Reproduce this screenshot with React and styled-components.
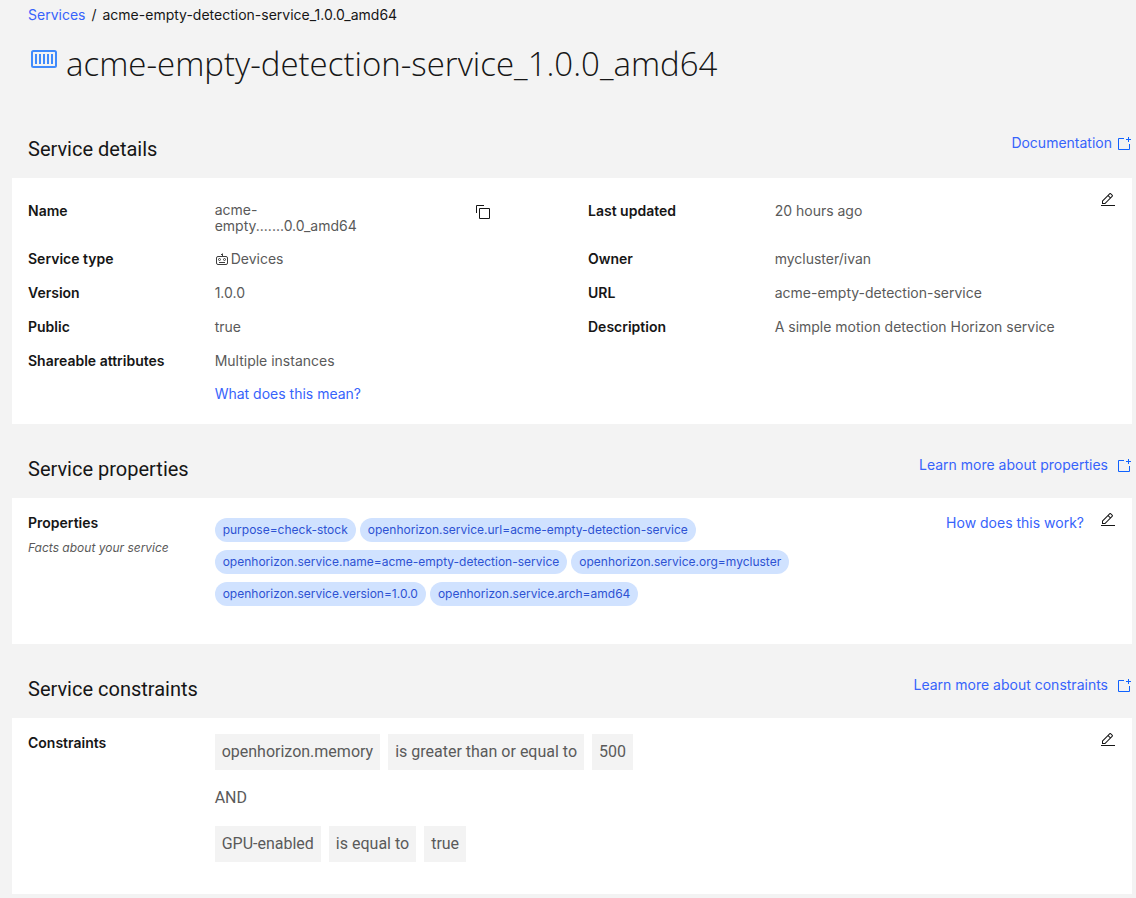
import React from "react";
import styled, { createGlobalStyle } from "styled-components";

const color = {
  page: "#f3f3f3",
  card: "#ffffff",
  ink: "#161616",
  text: "#5a5a5a",
  link: "#3763fb",
  tagFill: "#d0e2ff",
  tagText: "#2d52d3",
};

const GlobalStyle = createGlobalStyle`
  *, *::before, *::after { box-sizing: border-box; }
  body {
    margin: 0;
    background: ${color.page};
    color: ${color.ink};
    font-family: Inter, "Liberation Sans", sans-serif;
    font-size: 14px;
    line-height: 18px;
  }
  h1, h2, h3, p, dl, dd, ol, ul { margin: 0; padding: 0; }
  ol, ul { list-style: none; }
`;

const Page = styled.main`
  padding: 6px 4px 4px 12px;
`;

const Breadcrumb = styled.ol`
  display: flex;
  gap: 6px;
  padding-left: 16px;
`;

const Link = styled.a`
  color: ${color.link};
  text-decoration: none;
  &:hover { text-decoration: underline; }
`;

const TitleBar = styled.header`
  display: flex;
  align-items: flex-start;
  gap: 8px;
  padding: 20px 0 20px 18px;
  svg { flex: none; margin-top: 6px; }
`;

const Title = styled.h1`
  font-family: "Open Sans", "Noto Sans", sans-serif;
  font-size: 33px;
  font-weight: 300;
  line-height: 40px;
`;

const SectionHeader = styled.div`
  display: flex;
  justify-content: space-between;
  align-items: flex-end;
  height: 74px;
  padding: 0 0 16px 16px;
`;

const SectionTitle = styled.h2`
  font-family: Roboto, "Liberation Sans", sans-serif;
  font-size: 20px;
  font-weight: 400;
  line-height: 26px;
`;

const DocLink = styled(Link)`
  display: flex;
  align-items: center;
  gap: ${(p) => (p.$tight ? 4 : 8)}px;
  padding-bottom: ${(p) => (p.$tight ? 10 : 8)}px;
`;

const Card = styled.div`
  display: grid;
  background: ${color.card};
  padding-bottom: ${(p) => p.$bottom}px;
  & > * { grid-area: 1 / 1; }
`;

const IconButton = styled.button`
  display: block;
  width: 16px;
  height: 16px;
  padding: 0;
  border: 0;
  background: none;
  color: ${color.ink};
  cursor: pointer;
  svg { display: block; }
`;

const EditButton = styled(IconButton)`
  justify-self: end;
  margin: 14px 16px 0 0;
`;

const Details = styled.dl`
  display: grid;
  grid-template-columns: 1fr 2fr 1fr 2fr;
  row-gap: 16px;
  padding-top: 24px;
`;

const Label = styled.dt`
  padding-left: 16px;
  font-weight: 600;
`;

const Value = styled.dd`
  padding: 0 16px;
  color: ${color.text};
  grid-column: ${(p) => (p.$wide ? "span 3" : "auto")};
`;

const CopyValue = styled(Value)`
  display: grid;
  grid-template-columns: 1fr 1fr;
  padding-right: 0;
  line-height: 16px;
  ${IconButton} { justify-self: center; margin-top: 2px; }
`;

const IconText = styled.span`
  display: flex;
  align-items: center;
`;

const MoreInfo = styled.p`
  padding-top: 15px;
`;

const Columns = styled.div`
  display: grid;
  grid-template-columns: 1fr 4fr 1fr;
  padding-top: 16px;
`;

const LabelCell = styled.div`
  padding-left: 16px;
`;

const LabelTitle = styled.h3`
  font-size: 14px;
  font-weight: 600;
`;

const Hint = styled.p`
  padding-top: 8px;
  color: ${color.text};
  font-size: 12px;
  line-height: 16px;
  font-style: italic;
`;

const Tags = styled.ul`
  display: flex;
  flex-wrap: wrap;
  gap: 8px 4px;
  padding: 4px 16px 0;
`;

const Tag = styled.li`
  padding: 4px 8px;
  border-radius: 12px;
  background: ${color.tagFill};
  color: ${color.tagText};
  font-size: 12px;
  line-height: 16px;
`;

const HelpLink = styled(Link)`
  justify-self: end;
  padding-right: 48px;
  white-space: nowrap;
`;

const Expression = styled.div`
  padding: 0 16px;
  color: ${color.text};
  font-family: Roboto, "Liberation Sans", sans-serif;
  font-size: 16px;
  line-height: 20px;
`;

const Clause = styled.div`
  display: flex;
  flex-wrap: wrap;
  gap: 8px;
`;

const Token = styled.span`
  padding: 8px 7px;
  background: ${color.page};
`;

const Operator = styled.p`
  padding: 18px 0;
`;

const ContainerIcon = () => (
  <svg width="28" height="20" viewBox="0 0 28 20" aria-hidden="true">
    <rect x="2" y="1" width="24" height="16" rx="1.5" fill="none" stroke="#408bfc" strokeWidth="2" />
    <path d="M6 4v10M10 4v10M14 4v10M18 4v10M22 4v10" stroke="#408bfc" strokeWidth="2" />
  </svg>
);

const NewTabIcon = () => (
  <svg width="16" height="16" viewBox="0 -2 32 32" fill="#0f62fe" aria-hidden="true">
    <path d="M26 28H6a2 2 0 0 1-2-2V6a2 2 0 0 1 2-2h10v2H6v20h20V16h2v10a2 2 0 0 1-2 2z" />
    <path d="M26 6V2h-2v4h-4v2h4v4h2V8h4V6z" />
  </svg>
);

const EditIcon = () => (
  <svg width="16" height="16" viewBox="0 0 32 32" fill="currentColor" aria-hidden="true">
    <path d="M2 26h28v2H2zM25.4 9c.8-.8.8-2 0-2.8l-3.6-3.6c-.8-.8-2-.8-2.8 0l-15 15V24h6.4l15-15zm-5-5L24 7.6l-3 3L17.4 7l3-3zM6 22v-3.6l10-10 3.6 3.6-10 10H6z" />
  </svg>
);

const CopyIcon = () => (
  <svg width="16" height="16" viewBox="0 0 32 32" fill="currentColor" aria-hidden="true">
    <path d="M28 10v18H10V10h18m0-2H10a2 2 0 0 0-2 2v18a2 2 0 0 0 2 2h18a2 2 0 0 0 2-2V10a2 2 0 0 0-2-2z" />
    <path d="M4 18H2V4a2 2 0 0 1 2-2h14v2H4z" />
  </svg>
);

const DeviceIcon = () => (
  <svg width="16" height="16" viewBox="1 0 16 16" fill="none" stroke="#3d3d3d" aria-hidden="true">
    <rect x="2.5" y="5.5" width="11" height="8" rx="1.5" />
    <path d="M8.5 5.5V2.5M7 3.5h2M5 11.5h6" />
    <circle cx="5.5" cy="8.5" r="1" />
    <circle cx="10.5" cy="8.5" r="1" />
  </svg>
);

const tags = [
  "purpose=check-stock",
  "openhorizon.service.url=acme-empty-detection-service",
  "openhorizon.service.name=acme-empty-detection-service",
  "openhorizon.service.org=mycluster",
  "openhorizon.service.version=1.0.0",
  "openhorizon.service.arch=amd64",
];

function Section({ title, link, tight, bottom, children }) {
  return (
    <section aria-label={title}>
      <SectionHeader>
        <SectionTitle>{title}</SectionTitle>
        <DocLink href="#docs" $tight={tight}>
          {link}
          <NewTabIcon />
        </DocLink>
      </SectionHeader>
      <Card $bottom={bottom}>
        {children}
        <EditButton type="button" aria-label={`Edit ${title.toLowerCase()}`}>
          <EditIcon />
        </EditButton>
      </Card>
    </section>
  );
}

export default function App() {
  return (
    <Page>
      <GlobalStyle />
      <nav aria-label="Breadcrumb">
        <Breadcrumb>
          <li><Link href="#services">Services</Link></li>
          <li aria-hidden="true">/</li>
          <li>acme-empty-detection-service_1.0.0_amd64</li>
        </Breadcrumb>
      </nav>
      <TitleBar>
        <ContainerIcon />
        <Title>acme-empty-detection-service_1.0.0_amd64</Title>
      </TitleBar>

      <Section title="Service details" link="Documentation" tight bottom={21}>
        <Details>
          <Label>Name</Label>
          <CopyValue>
            <span>acme-empty.......0.0_amd64</span>
            <IconButton type="button" aria-label="Copy name"><CopyIcon /></IconButton>
          </CopyValue>
          <Label>Last updated</Label>
          <Value>20 hours ago</Value>

          <Label>Service type</Label>
          <Value><IconText><DeviceIcon />Devices</IconText></Value>
          <Label>Owner</Label>
          <Value>mycluster/ivan</Value>

          <Label>Version</Label>
          <Value>1.0.0</Value>
          <Label>URL</Label>
          <Value>acme-empty-detection-service</Value>

          <Label>Public</Label>
          <Value>true</Value>
          <Label>Description</Label>
          <Value>A simple motion detection Horizon service</Value>

          <Label>Shareable attributes</Label>
          <Value $wide>
            Multiple instances
            <MoreInfo><Link href="#sharing">What does this mean?</Link></MoreInfo>
          </Value>
        </Details>
      </Section>

      <Section title="Service properties" link="Learn more about properties" bottom={38}>
        <Columns>
          <LabelCell>
            <LabelTitle>Properties</LabelTitle>
            <Hint>Facts about your service</Hint>
          </LabelCell>
          <Tags>
            {tags.map((t) => <Tag key={t}>{t}</Tag>)}
          </Tags>
          <HelpLink href="#properties-help">How does this work?</HelpLink>
        </Columns>
      </Section>

      <Section title="Service constraints" link="Learn more about constraints" bottom={32}>
        <Columns>
          <LabelCell>
            <LabelTitle>Constraints</LabelTitle>
          </LabelCell>
          <Expression>
            <Clause>
              <Token>openhorizon.memory</Token>
              <Token>is greater than or equal to</Token>
              <Token>500</Token>
            </Clause>
            <Operator>AND</Operator>
            <Clause>
              <Token>GPU-enabled</Token>
              <Token>is equal to</Token>
              <Token>true</Token>
            </Clause>
          </Expression>
        </Columns>
      </Section>
    </Page>
  );
}
